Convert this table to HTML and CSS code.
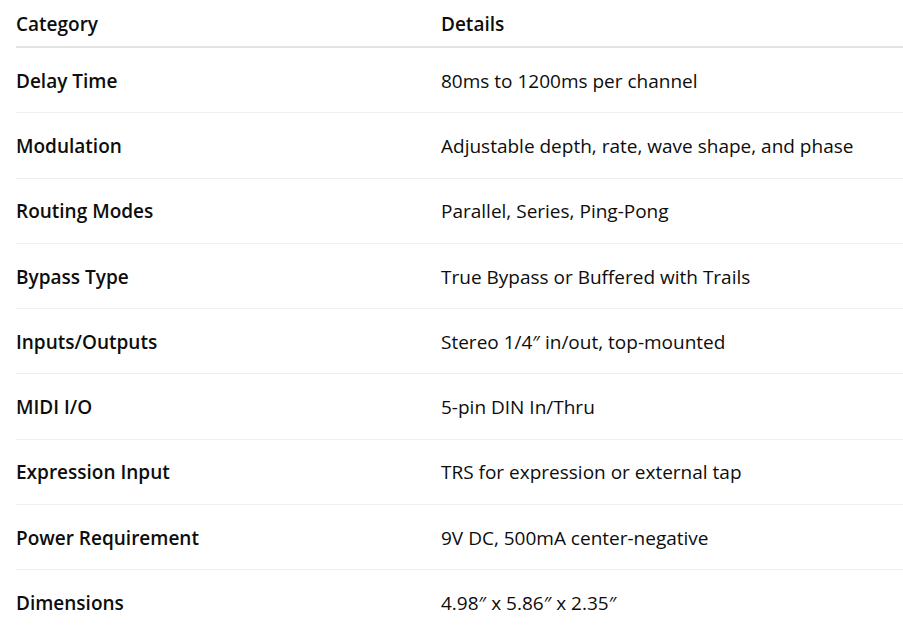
FILE: index.html
```html
<!DOCTYPE html>
<html>
<head>
<meta charset="utf-8">
<link rel="stylesheet" href="styles.css">
</head>
<body>
<table class="spec">
  <thead>
    <tr><th class="c1">Category</th><th class="c2">Details</th></tr>
  </thead>
  <tbody>
    <tr><td class="c1">Delay Time</td><td class="c2">80ms to 1200ms per channel</td></tr>
    <tr><td class="c1">Modulation</td><td class="c2">Adjustable depth, rate, wave shape, and phase</td></tr>
    <tr><td class="c1">Routing Modes</td><td class="c2">Parallel, Series, Ping-Pong</td></tr>
    <tr><td class="c1">Bypass Type</td><td class="c2">True Bypass or Buffered with Trails</td></tr>
    <tr><td class="c1">Inputs/Outputs</td><td class="c2">Stereo 1/4″ in/out, top-mounted</td></tr>
    <tr><td class="c1">MIDI I/O</td><td class="c2">5-pin DIN In/Thru</td></tr>
    <tr><td class="c1">Expression Input</td><td class="c2">TRS for expression or external tap</td></tr>
    <tr><td class="c1">Power Requirement</td><td class="c2">9V DC, 500mA center-negative</td></tr>
    <tr><td class="c1">Dimensions</td><td class="c2">4.98″ x 5.86″ x 2.35″</td></tr>
  </tbody>
</table>
</body>
</html>
```
FILE: styles.css
```css
html, body {
  margin: 0;
  padding: 0;
  background: #ffffff;
}
body {
  padding-left: 16px;
  font-family: "Open Sans", "Noto Sans", sans-serif;
  font-size: 19px;
  color: #0d0d0d;
}
.spec {
  border-collapse: collapse;
  width: 900px;
  table-layout: fixed;
}
.spec th, .spec td {
  text-align: left;
  padding: 0;
  vertical-align: middle;
}
.spec th {
  font-weight: 600;
  height: 45px;
  padding-top: 1px;
  border-bottom: 2px solid #e3e3e3;
}
.spec td {
  height: 63.3px;
  padding-top: 1px;
  border-bottom: 1px solid #f0f0f0;
}
.spec td.c1 {
  font-weight: 600;
}
.c1 { width: 425px; }
.spec tbody tr:last-child td { border-bottom: none; }
```
